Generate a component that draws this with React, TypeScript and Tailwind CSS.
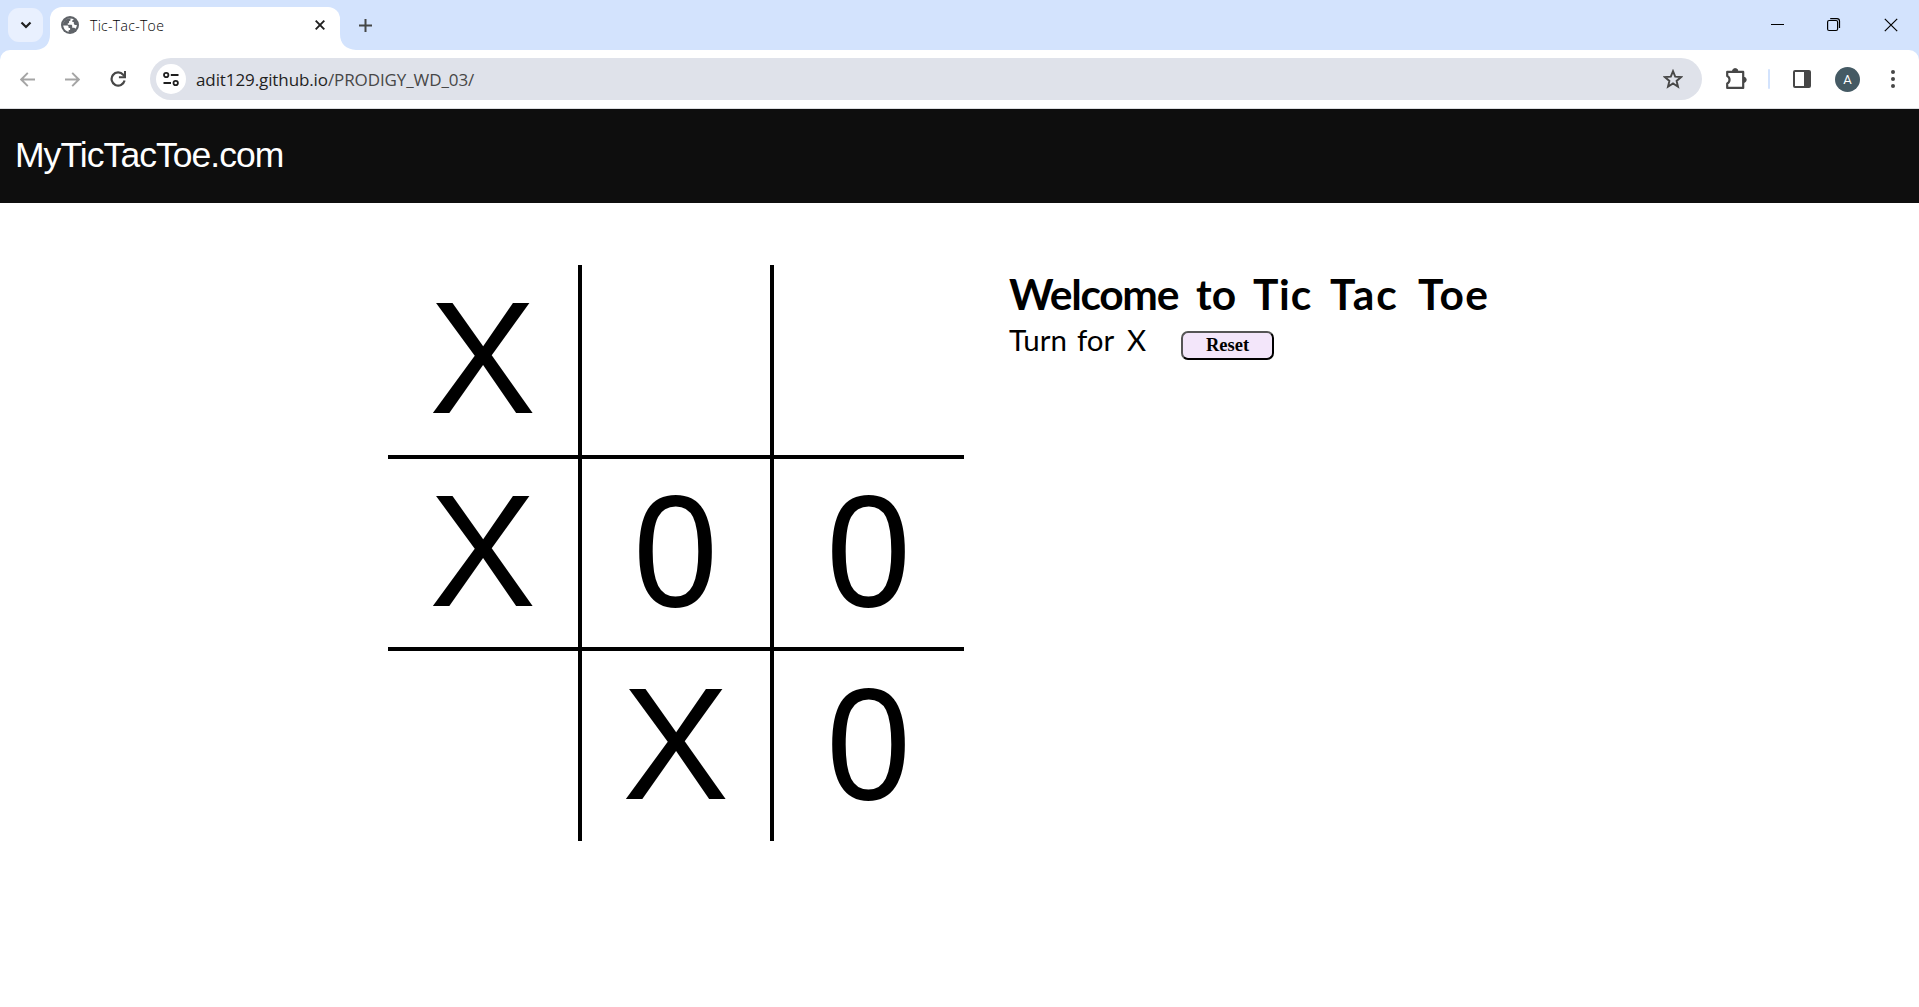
import type { ReactNode } from "react";

type Mark = "X" | "0" | "";

const board: { mark: Mark; edges: string }[] = [
  { mark: "X", edges: "border-r-2 border-b-2" },
  { mark: "", edges: "border-x-2 border-b-2" },
  { mark: "", edges: "border-l-2 border-b-2" },
  { mark: "X", edges: "border-r-2 border-y-2" },
  { mark: "0", edges: "border-2" },
  { mark: "0", edges: "border-l-2 border-y-2" },
  { mark: "", edges: "border-r-2 border-t-2" },
  { mark: "X", edges: "border-x-2 border-t-2" },
  { mark: "0", edges: "border-l-2 border-t-2" },
];

function Icon({ size, children, className = "" }: { size: number; children: ReactNode; className?: string }) {
  return (
    <svg width={size} height={size} viewBox={`0 0 ${size} ${size}`} fill="none" stroke="currentColor" className={`block shrink-0 ${className}`}>
      {children}
    </svg>
  );
}

function TabStrip() {
  return (
    <div className="flex h-[50px] items-start bg-[#d3e3fd]">
      <button className="mt-2 ml-2 flex h-[34px] w-[35px] items-center justify-center rounded-[11px] bg-[#e9f0fe] text-[#1f1f1f]">
        <Icon size={12}><path d="M1.500 3.500 6 8l4.500-4.500" strokeWidth="2.200" /></Icon>
      </button>
      <svg width="16" height="16" viewBox="0 0 16 16" className="-ml-[7px] -mr-[2px] self-end"><path d="M16 0v16H0C9 15 14 10 14 0z" fill="#fff" /></svg>
      <div className="mt-[7px] flex h-[43px] w-[290px] items-center rounded-t-[12px] bg-white pb-[7px] pl-[11px]">
        <svg width="18" height="18" viewBox="0 0 18 18" className="shrink-0">
          <circle cx="9" cy="9" r="9" fill="#5f6368" />
          <path d="M2.200 8.600C2.500 5.600 4.800 2.900 8 2.200c1 0 1.500.4 1.500 1v.9c0 .7-.7 1-1.400 1v1.300c0 .6-.6.900-1.300.9v1.400h3.300c.8 0 1.100.7 1.100 1.300v1.700h1.400c.9 0 1.400.4 1.700 1.100 1-1.200 1.500-2.400 1.500-3.900h-1.500c-1.200 0-1.500-.8-1.500-1.800V5.900h-1.500V4.400l1.600-1.100C9 1.700 3 2.500 2.200 8.600zM2.200 9.600h3.900c.9 0 1.500.6 1.500 1.500v1h1.500v2h-1.400v1.700C4.900 15.500 2.600 13 2.200 9.600z" fill="#fff" />
        </svg>
        <span className="mt-px ml-[11px] font-['Open_Sans','Noto_Sans',sans-serif] text-[14px] leading-none font-light tracking-[0.3px] text-black">Tic-Tac-Toe</span>
        <Icon size={10} className="mr-[15px] ml-auto text-[#1f1f1f]"><path d="m.7.7 8.600 8.600M9.300.7.7 9.300" strokeWidth="1.900" /></Icon>
      </div>
      <svg width="16" height="16" viewBox="0 0 16 16" className="self-end"><path d="M0 0v16h16C6 15 0 10 0 0z" fill="#fff" /></svg>
      <Icon size={13} className="mt-[19px] ml-[3px] text-[#444746]"><path d="M6.500 0v13M0 6.500h13" strokeWidth="2" /></Icon>
      <div className="mt-[18px] mr-[21px] ml-auto flex items-center gap-[43px] text-black">
        <Icon size={14}><path d="M.5 6.500h13" shapeRendering="crispEdges" /></Icon>
        <Icon size={14}>
          <rect x=".6" y="2.500" width="10" height="10" rx="1.500" strokeWidth="1.200" />
          <path d="M3.200.6h6.800a2.500 2.500 0 0 1 2.500 2.500V10" strokeWidth="1.200" />
        </Icon>
        <Icon size={14}><path d="m.8.800 12.400 12.400M13.200.8.8 13.200" strokeWidth="1.200" /></Icon>
      </div>
    </div>
  );
}

function Toolbar() {
  return (
    <div className="bg-[#d3e3fd]">
      <div className="flex h-[59px] items-center rounded-t-[10px] border-b border-[#dcdde0] bg-white pl-[20px] text-[#474747]">
        <Icon size={15} className="text-[#a5a5a5]"><path d="M15 7.500H1.500M7.800.8 1.200 7.500l6.600 6.700" strokeWidth="1.900" /></Icon>
        <Icon size={15} className="ml-[30px] text-[#a5a5a5]"><path d="M0 7.500h13.500M7.200.8l6.600 6.700-6.600 6.700" strokeWidth="1.900" /></Icon>
        <Icon size={16} className="ml-[30px]">
          <path d="M14.600 9.600A6.600 6.600 0 1 1 13.200 3.700L15 5.600" strokeWidth="2.200" />
          <path d="M15 0v6.200H8.900" strokeWidth="2" />
        </Icon>
        <div className="ml-[24px] flex h-[42px] w-[1552px] items-center rounded-full bg-[#dfe2ea] pl-[6px]">
          <div className="flex size-[30px] items-center justify-center rounded-full bg-white text-[#1f1f1f]">
            <Icon size={16}>
              <circle cx="3.200" cy="4" r="2.200" strokeWidth="1.800" />
              <circle cx="12.700" cy="12" r="2.200" strokeWidth="1.800" />
              <path d="M7.800 4H15.500M.5 12H8" strokeWidth="1.800" />
            </Icon>
          </div>
          <span className="ml-[10px] font-['Open_Sans','Noto_Sans',sans-serif] text-[17px] leading-none tracking-[-0.1px] whitespace-nowrap text-[#1f1f1f]">
            adit129.github.io<span className="text-[#474747]">/PRODIGY_WD_03/</span>
          </span>
          <Icon size={20} className="mr-[19px] ml-auto">
            <path d="m10 2.200 2.200 5.500 5.900.4-4.500 3.800 1.400 5.800-5-3.200-5 3.200 1.400-5.800L1.900 8.100l5.900-.4z" strokeWidth="1.900" />
          </Icon>
        </div>
        <Icon size={22} className="ml-[23px]">
          <path d="M2.200 3.900h16v16h-16v-4.300c3.100-1.500 3.100-6 0-7.500z" strokeWidth="2.200" strokeLinejoin="round" />
          <path d="M7.500 3.300a2.700 2.700 0 0 1 5.400 0zM18.600 9.200a2.600 2.600 0 0 1 0 5.200z" fill="currentColor" />
        </Icon>
        <div className="ml-[21px] h-5 w-[2px] rounded bg-[#d3e3fd]" />
        <Icon size={18} className="ml-[23px]">
          <rect x="1" y="1" width="16" height="16" rx="1" strokeWidth="2" />
          <path d="M11 1h6v16h-6z" fill="currentColor" stroke="none" />
        </Icon>
        <div className="ml-[24px] flex size-[25px] items-center justify-center rounded-full bg-[#455a64] font-[Roboto,sans-serif] text-[13px] leading-none text-white">A</div>
        <Icon size={18} className="ml-[24px]">
          <g fill="currentColor" stroke="none"><circle cx="9" cy="2" r="2" /><circle cx="9" cy="9" r="2" /><circle cx="9" cy="16" r="2" /></g>
        </Icon>
      </div>
    </div>
  );
}

export default function App() {
  return (
    <div className="flex h-[1007px] w-[1919px] flex-col overflow-hidden bg-white text-black">
      <TabStrip />
      <Toolbar />
      <nav className="flex h-[94px] items-center bg-[#0e0e0e] pb-px pl-[15px] font-['Liberation_Sans',Arial,sans-serif] text-[35.500px] leading-none tracking-[-0.95px] text-white">
        MyTicTacToe.com
      </nav>
      <main className="flex items-start pt-[62px] pl-[388px]">
        <div className="grid grid-cols-[repeat(3,192px)] grid-rows-[repeat(3,192px)]">
          {board.map((cell, i) => (
            <div key={i} className={`flex items-center justify-center border-black font-['Liberation_Sans',Arial,sans-serif] text-[160px] leading-none ${cell.edges}`}>
              <span className={cell.mark === "0" ? "-mt-[5px] -ml-[2px] scale-x-95" : "-mt-[5px] -ml-px"}>{cell.mark}</span>
            </div>
          ))}
        </div>
        <section className="ml-[45px] font-[Lato,sans-serif]">
          <h1 className="mt-[5px] flex text-[42.500px] leading-[47px] font-bold whitespace-nowrap">
            <span className="w-[187px] tracking-[-1.300px]">Welcome</span>{" "}
            <span className="w-[57px]">to</span>{" "}
            <span className="w-[77px] tracking-[0.800px]">Tic</span>{" "}
            <span className="w-[88px] tracking-[2px]">Tac</span>{" "}
            <span className="tracking-[1.200px]">Toe</span>
          </h1>
          <div className="flex">
            <div className="mt-[2px] flex w-[172px] text-[29.500px] leading-[42px] whitespace-nowrap">
              <span className="w-[68px]">Turn</span>{" "}
              <span className="w-[50px]">for</span>{" "}
              <span>X</span>
            </div>
            <button className="mt-[14px] h-[29px] w-[93px] rounded-[7px] border-2 border-t-[#555] border-r-black border-b-black border-l-[#555] bg-[#f3e6fa] font-['Liberation_Serif',serif] text-[18.500px] leading-none font-bold">
              Reset
            </button>
          </div>
        </section>
      </main>
    </div>
  );
}
